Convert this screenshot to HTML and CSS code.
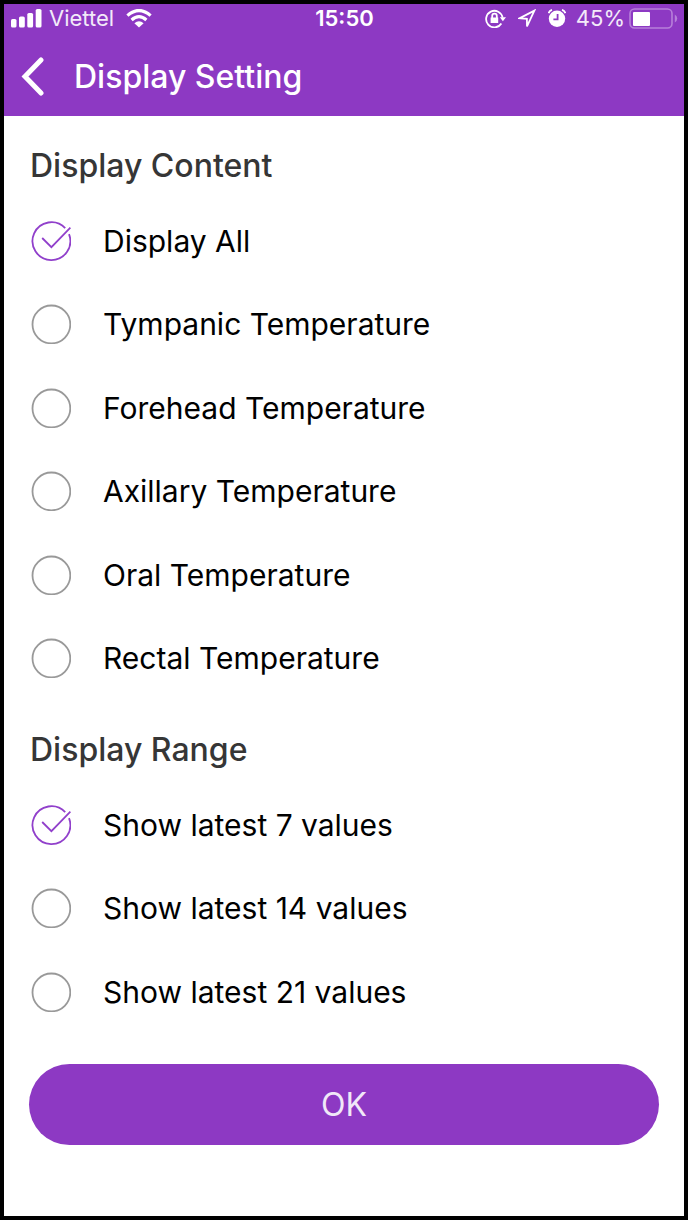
FILE: index.html
```html
<!DOCTYPE html>
<html lang="en">
<head>
<meta charset="utf-8">
<meta name="viewport" content="width=device-width, initial-scale=1">
<title>Display Setting</title>
<link rel="stylesheet" href="styles.css">
</head>
<body>
<svg class="defs" aria-hidden="true">
  <symbol id="ring" viewBox="0 0 40 40"><circle cx="20.4" cy="20.4" r="18.9"/></symbol>
  <symbol id="tick" viewBox="0 0 40 40"><path d="M38 13.2A18.9 18.9 0 1 1 34.2 7.2M11.2 17l9.2 9.2L39.4 6.6"/></symbol>
</svg>
<div class="screen">
  <header class="top">
    <div class="status">
      <div class="status-left">
        <svg class="signal" viewBox="0 0 31 19" aria-hidden="true"><rect x="0" y="10" width="5.5" height="8.5" rx="1.6"/><rect x="8" y="7.5" width="5.8" height="11" rx="1.6"/><rect x="16.3" y="4" width="5.8" height="14.5" rx="1.6"/><rect x="24.7" y="0" width="5.8" height="18.5" rx="1.6"/></svg>
        <span>Viettel</span>
        <svg class="wifi" viewBox="0 0 26 19" aria-hidden="true"><path class="wave" d="M1.4 6.6Q13-3.6 24.6 6.6M5.6 11Q13 4.4 20.4 11"/><path d="M8.4 14.2q4.6-4 9.2 0L13 18.6z"/></svg>
      </div>
      <time class="clock">15:50</time>
      <div class="status-right">
        <svg class="lock" viewBox="0 0 21 19" aria-hidden="true"><path class="line" d="M16.4 14.6A8.3 8.3 0 1 1 17.6 8.6"/><path d="M14.8 8.2h6.2l-3.1 4zM5.6 8.5h7.6v5.6H5.6z"/><path class="line" d="M7.2 9V6.9a2.3 2.3 0 0 1 4.6 0V9"/></svg>
        <svg class="arrow" viewBox="0 0 18 19" aria-hidden="true"><path class="line" d="M16.4 1.6L1.8 9.2l7.1.7.1 7.5z"/></svg>
        <svg class="alarm" viewBox="0 0 18 19" aria-hidden="true"><circle cx="9" cy="9.8" r="8.2"/><path class="line" d="M.6 4.2Q1.4 1.6 4 .8M17.4 4.2Q16.6 1.6 14 .8"/><path class="hand" d="M9.6 5v5.4H5.4"/></svg>
        <span>45%</span>
        <svg class="battery" viewBox="0 0 49 21" aria-hidden="true"><rect class="case" x="1" y="1" width="42" height="19" rx="4.5"/><rect x="4" y="4" width="17" height="14" rx="1"/><path class="cap" d="M45.8 6.4q2.4 1.4 2.4 4.1t-2.4 4.1z"/></svg>
      </div>
    </div>
    <div class="bar">
      <button class="back" type="button" aria-label="Back"><svg viewBox="0 0 24 40" aria-hidden="true"><path d="M21 3L5 19.6 21 36"/></svg></button>
      <h1 class="title">Display Setting</h1>
    </div>
  </header>
  <form class="settings">
    <h2 class="heading" id="content">Display Content</h2>
    <div class="options six" role="radiogroup" aria-labelledby="content">
      <label class="option"><span class="mark"><input type="radio" name="content" checked><svg class="off"><use href="#ring"/></svg><svg class="on"><use href="#tick"/></svg></span>Display All</label>
      <label class="option"><span class="mark"><input type="radio" name="content"><svg class="off"><use href="#ring"/></svg><svg class="on"><use href="#tick"/></svg></span>Tympanic Temperature</label>
      <label class="option"><span class="mark"><input type="radio" name="content"><svg class="off"><use href="#ring"/></svg><svg class="on"><use href="#tick"/></svg></span>Forehead Temperature</label>
      <label class="option"><span class="mark"><input type="radio" name="content"><svg class="off"><use href="#ring"/></svg><svg class="on"><use href="#tick"/></svg></span>Axillary Temperature</label>
      <label class="option"><span class="mark"><input type="radio" name="content"><svg class="off"><use href="#ring"/></svg><svg class="on"><use href="#tick"/></svg></span>Oral Temperature</label>
      <label class="option"><span class="mark"><input type="radio" name="content"><svg class="off"><use href="#ring"/></svg><svg class="on"><use href="#tick"/></svg></span>Rectal Temperature</label>
    </div>
    <h2 class="heading" id="range">Display Range</h2>
    <div class="options three" role="radiogroup" aria-labelledby="range">
      <label class="option"><span class="mark"><input type="radio" name="range" checked><svg class="off"><use href="#ring"/></svg><svg class="on"><use href="#tick"/></svg></span>Show latest 7 values</label>
      <label class="option"><span class="mark"><input type="radio" name="range"><svg class="off"><use href="#ring"/></svg><svg class="on"><use href="#tick"/></svg></span>Show latest 14 values</label>
      <label class="option"><span class="mark"><input type="radio" name="range"><svg class="off"><use href="#ring"/></svg><svg class="on"><use href="#tick"/></svg></span>Show latest 21 values</label>
    </div>
    <button class="ok" type="button">OK</button>
  </form>
</div>
</body>
</html>
```
FILE: styles.css
```css
* { box-sizing: border-box; }
body {
  margin: 0;
  font-family: Inter, "Liberation Sans", sans-serif;
  color: #000;
  background: #fff;
}
.defs { position: absolute; width: 0; height: 0; }
.screen {
  min-height: 100vh;
  border: 4px solid #000;
  background: #fff;
}
.top { background: #8d39c3; color: #fff; }
.status {
  display: grid;
  grid-template-columns: 1fr auto 1fr;
  align-items: center;
  height: 28px;
  padding: 0 6px 0 7px;
  font-size: 22px;
  line-height: 28px;
}
.status svg { fill: #fff; flex: none; }
.status .line, .status .wave { fill: none; stroke: #fff; stroke-width: 1.8; }
.status .wave { stroke-width: 3.2; }
.status-left, .status-right { display: flex; align-items: center; color: #f3eaf9; }
.status-left { gap: 7px; }
.status-right { justify-content: flex-end; }
.signal { width: 31px; height: 19px; }
.wifi { width: 26px; height: 19px; margin-left: 5px; }
.clock { font-weight: 600; }
.lock { width: 21px; height: 19px; margin-right: 12px; }
.arrow { width: 18px; height: 19px; margin-right: 12px; }
.alarm { width: 18px; height: 19px; margin-right: 10px; }
.status .hand { fill: none; stroke: #8d39c3; stroke-width: 1.8; }
.battery { width: 49px; height: 21px; margin-left: 4px; }
.battery .case { fill: none; stroke: #b780da; stroke-width: 1.6; }
.battery .cap { fill: #b780da; }
.bar { display: flex; align-items: center; height: 84px; padding: 6px 16px 0; gap: 28px; }
.back { display: flex; width: 26px; padding: 0; border: 0; background: none; }
.back svg { width: 24px; height: 40px; fill: none; stroke: #fff; stroke-width: 5; stroke-linecap: round; }
.title { margin: 0; font-size: 32px; line-height: 40px; font-weight: 500; }
.settings { display: flex; flex-direction: column; padding: 0 26px; }
.heading {
  margin: 30px 0 13px;
  font-size: 32px;
  line-height: 40px;
  font-weight: 500;
  color: #363636;
}
.options { display: grid; grid-auto-rows: 1fr; }
.six { min-height: 501px; }
.three { min-height: 251px; }
.option { display: flex; align-items: center; gap: 32px; font-size: 30px; line-height: 40px; }
.mark { display: grid; width: 40px; height: 40px; margin-left: 1px; }
.mark > * { grid-area: 1 / 1; width: 40px; height: 40px; margin: 0; }
.mark input { appearance: none; border-radius: 50%; }
.mark svg { fill: none; stroke: #999; stroke-width: 1.8; pointer-events: none; }
.mark .on { stroke: #9140cb; visibility: hidden; }
.mark input:checked ~ .on { visibility: visible; }
.mark input:checked ~ .off { visibility: hidden; }
.ok {
  height: 81px;
  margin: 30px -1px 0;
  border: 0;
  border-radius: 41px;
  background: #8d39c3;
  color: #f1e8f8;
  font-family: inherit;
  font-size: 32px;
  line-height: 40px;
}
```
